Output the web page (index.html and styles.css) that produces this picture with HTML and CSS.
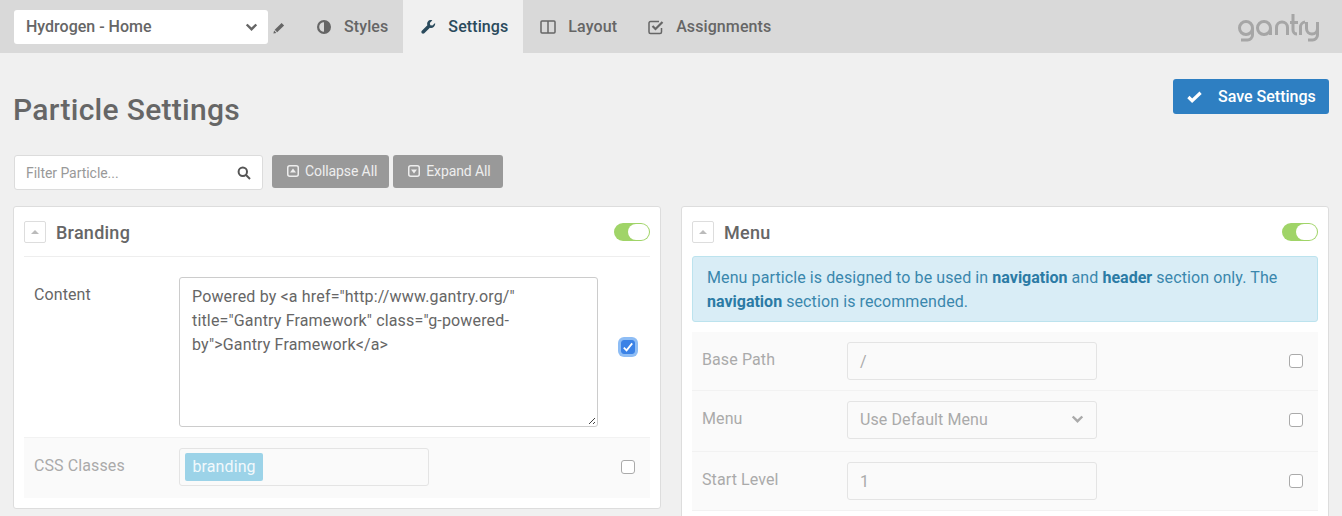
FILE: index.html
```html
<!DOCTYPE html>
<html lang="en">
<head>
  <meta charset="UTF-8">
  <title>Particle Settings</title>
  <link rel="stylesheet" href="styles.css">
</head>
<body>
  <nav class="topbar">
    <div class="outline-select">
      <span>Hydrogen - Home</span>
      <svg class="chevron" viewBox="0 0 12 8"><path d="M1.200 1.500 6 6.200l4.800-4.700"/></svg>
    </div>
    <svg class="pencil" viewBox="0 0 12 12"><path d="M8.600.9l2.500 2.500-6.900 6.900-2.500-2.500zM1.100 8.600l2.300 2.300-3 .7z"/></svg>
    <ul class="tabs">
      <li class="tab">
        <svg class="tab-icon" viewBox="0 0 16 16"><path d="M8 1a7 7 0 1 0 0 14A7 7 0 0 0 8 1zm0 2.200v9.600a4.800 4.800 0 0 1 0-9.600z" fill-rule="evenodd"/></svg>
        Styles
      </li>
      <li class="tab active">
        <svg class="tab-icon" viewBox="0 0 16 16"><path d="M15 3.800l-2.800 2.700-2.300-.5-.5-2.300L12.100.9c-1.800-.6-3.700-.1-4.700 1.200-.9 1.100-1.100 2.600-.6 4L.9 12c-.7.700-.7 1.900 0 2.600s1.900.7 2.600 0l6-5.900c1.400.5 2.900.2 4-.7 1.300-1.100 1.900-2.900 1.500-4.200z"/></svg>
        Settings
      </li>
      <li class="tab">
        <svg class="tab-icon line" viewBox="0 0 16 16"><rect x="1" y="2" width="14" height="12" rx="1"/><path d="M8 2v12"/></svg>
        Layout
      </li>
      <li class="tab">
        <svg class="tab-icon line" viewBox="0 0 16 16"><path d="M13.500 9v4a1.500 1.500 0 0 1-1.500 1.500H2.500A1.500 1.500 0 0 1 1 13V4a1.500 1.500 0 0 1 1.500-1.500H11"/><path class="thick" d="M4.500 7l3 3 7-7"/></svg>
        Assignments
      </li>
    </ul>
    <svg class="logo" viewBox="0 0 82 28">
      <circle cx="8" cy="14" r="6.500"/>
      <path d="M14.500 14v7a5 5 0 0 1-5 5H3"/>
      <circle cx="26" cy="14" r="6.500"/>
      <path d="M32.500 14v7"/>
      <path d="M38.500 21v-7.500a5.500 5.500 0 0 1 11 0V21"/>
      <path d="M55 0v16a4 4 0 0 0 4 4M52 8.500h8"/>
      <path d="M62.500 21v-8a5 5 0 0 1 4.500-5"/>
      <path d="M68.500 8v6.500a5.500 5.500 0 0 0 11 0V8M79.500 14v7a5 5 0 0 1-5 5H70"/>
    </svg>
  </nav>

  <main class="content">
    <div class="title-row">
      <h1>Particle Settings</h1>
      <button class="save-btn">
        <svg viewBox="0 0 16 12"><path d="M1.500 6l4 4 9-8.500"/></svg>
        Save Settings
      </button>
    </div>

    <div class="filter-row">
      <div class="filter">
        <span>Filter Particle...</span>
        <svg viewBox="0 0 14 14"><circle cx="5.800" cy="5.800" r="4.200"/><path d="M9 9l4 4"/></svg>
      </div>
      <button class="gray-btn">
        <svg viewBox="0 0 12 12"><rect x="0.750" y="0.750" width="10.500" height="10.500" rx="2"/><path class="arrow" d="M6 3.500l3 4H3z"/></svg>
        Collapse All
      </button>
      <button class="gray-btn">
        <svg viewBox="0 0 12 12"><rect x="0.750" y="0.750" width="10.500" height="10.500" rx="2"/><path class="arrow" d="M6 8.500l-3-4h6z"/></svg>
        Expand All
      </button>
    </div>

    <div class="columns">
      <section class="card">
        <header class="card-head with-line">
          <span class="collapse"></span>
          <h2>Branding</h2>
          <span class="toggle"></span>
        </header>
        <div class="field tall">
          <label>Content</label>
          <div class="textarea">Powered by &lt;a href="http://www.gantry.org/" title="Gantry Framework" class="g-powered-by"&gt;Gantry Framework&lt;/a&gt;
            <svg class="grip" viewBox="0 0 8 8"><path d="M7 1 1 7M7 5 5 7"/></svg>
          </div>
          <span class="check on">
            <svg viewBox="0 0 10 10"><path d="M1.500 5.500l2.300 2.300L8.500 2"/></svg>
          </span>
        </div>
        <div class="field off wide-bottom">
          <label>CSS Classes</label>
          <div class="input tags"><span class="tag">branding</span></div>
          <span class="check"></span>
        </div>
      </section>

      <section class="card">
        <header class="card-head">
          <span class="collapse"></span>
          <h2>Menu</h2>
          <span class="toggle"></span>
        </header>
        <p class="alert">Menu particle is designed to be used in <b>navigation</b> and <b>header</b> section only. The <b>navigation</b> section is recommended.</p>
        <div class="field off">
          <label>Base Path</label>
          <div class="input">/</div>
          <span class="check"></span>
        </div>
        <div class="field off wide-bottom">
          <label>Menu</label>
          <div class="input select">Use Default Menu
            <svg class="chevron" viewBox="0 0 12 8"><path d="M1.200 1.500 6 6.200l4.800-4.700"/></svg>
          </div>
          <span class="check"></span>
        </div>
        <div class="field off">
          <label>Start Level</label>
          <div class="input">1</div>
          <span class="check"></span>
        </div>
      </section>
    </div>
  </main>
</body>
</html>
```

FILE: styles.css
```css
* {
  box-sizing: border-box;
}

html, body {
  height: 516px;
  overflow: hidden;
}

body {
  margin: 0;
  background-color: #f0f0f0;
  color: #666666;
  font-family: Roboto, "Liberation Sans", sans-serif;
  font-size: 16px;
  letter-spacing: 0.1px;
}

/* top bar */
.topbar {
  display: flex;
  align-items: center;
  height: 53px;
  padding-left: 14px;
  background-color: #d9d9d9;
}

.outline-select {
  display: flex;
  align-items: center;
  justify-content: space-between;
  width: 254px;
  height: 34px;
  padding: 0 10px 0 12px;
  background-color: #fff;
  border-radius: 3px;
  font-weight: 500;
  letter-spacing: 0;
  color: #666;
}

.chevron {
  width: 13px;
  height: 8px;
  fill: none;
  stroke: #666;
  stroke-width: 2.400;
}

.pencil {
  width: 12px;
  height: 12px;
  margin: 2px 15px 0 5px;
  fill: #666;
}

.tabs {
  display: flex;
  align-self: stretch;
  margin: 0;
  padding: 0;
  list-style: none;
}

.tab {
  display: flex;
  align-items: center;
  gap: 12px;
  padding: 0 15px 0 16px;
  font-weight: 500;
  color: #666;
}

.tab.active {
  padding-left: 18px;
  background-color: #f0f0f0;
  color: #2a4a5c;
}

.tab.active .tab-icon {
  width: 15px;
}

.tab.active + .tab {
  padding-left: 17px;
}

.tab-icon {
  width: 16px;
  height: 16px;
  fill: currentColor;
}

.tab-icon.line {
  fill: none;
  stroke: currentColor;
  stroke-width: 1.500;
}

.tab-icon .thick {
  stroke-width: 2.200;
}

.logo {
  width: 82px;
  height: 28px;
  margin: 3px 22px 0 auto;
  fill: none;
  stroke: #a6a6a6;
  stroke-width: 3;
}

/* page content */
.content {
  padding: 26px 13px 0;
}

.title-row {
  display: flex;
  justify-content: space-between;
  height: 76px;
}

h1 {
  margin: 14px 0 0;
  font-size: 30px;
  font-weight: 500;
  line-height: 34px;
  letter-spacing: 0.3px;
  color: #666;
}

.save-btn {
  display: flex;
  align-items: center;
  gap: 16px;
  width: 156px;
  height: 35px;
  padding: 0 0 0 14px;
  border: 0;
  border-radius: 3px;
  background-color: #2e7fc2;
  color: #fff;
  font: 500 16px Roboto, sans-serif;
}

.save-btn svg {
  width: 15px;
  height: 12px;
  fill: none;
  stroke: #fff;
  stroke-width: 3.400;
}

.filter-row {
  display: flex;
  align-items: flex-start;
  gap: 4px;
  height: 51px;
  padding-left: 1px;
}

.filter {
  display: flex;
  align-items: center;
  justify-content: space-between;
  width: 249px;
  height: 35px;
  margin-right: 5px;
  padding: 0 11px 0 11px;
  background-color: #fff;
  border: 1px solid #dcdcdc;
  border-radius: 3px;
  font-size: 14px;
  letter-spacing: -0.05px;
  color: #999;
}

.filter svg {
  width: 14px;
  height: 14px;
  fill: none;
  stroke: #555;
  stroke-width: 2;
}

.gray-btn {
  display: flex;
  align-items: center;
  gap: 6px;
  height: 33px;
  padding: 0 12px 1px 15px;
  border: 0;
  border-radius: 3px;
  background-color: #999999;
  color: #eee;
  font: 400 14px Roboto, sans-serif;
  letter-spacing: -0.1px;
}

.gray-btn svg {
  width: 12px;
  height: 12px;
  fill: none;
  stroke: #eee;
  stroke-width: 1.500;
}

.gray-btn .arrow {
  fill: #eee;
  stroke: none;
}

.columns {
  display: grid;
  grid-template-columns: 648px 648px;
  gap: 20px;
  align-items: start;
}

/* particle cards */
.card {
  padding: 0 10px 10px;
  background-color: #fff;
  border: 1px solid #dddddd;
  border-radius: 3px;
}

.card-head {
  display: flex;
  align-items: center;
  height: 49px;
  padding-top: 1px;
}

.card-head.with-line {
  height: 50px;
  border-bottom: 1px solid #eeeeee;
}

.collapse {
  position: relative;
  width: 22px;
  height: 22px;
  margin-right: 10px;
  border: 1px solid #ddd;
  border-radius: 2px;
}

.collapse::after {
  content: "";
  position: absolute;
  left: 6px;
  top: 8px;
  border: 4px solid transparent;
  border-top: 0;
  border-bottom: 4px solid #bbb;
}

h2 {
  margin: 0;
  font-size: 18px;
  font-weight: 500;
  letter-spacing: 0.25px;
  color: #666;
}

.toggle {
  position: relative;
  width: 36px;
  height: 18px;
  margin-left: auto;
  background-color: #a0d468;
  border-radius: 9px;
}

.toggle::after {
  content: "";
  position: absolute;
  right: 1px;
  top: 1px;
  width: 21px;
  height: 16px;
  background-color: #fff;
  border-radius: 8px;
}

/* one row per option: label, control, override checkbox */
.field {
  display: flex;
  align-items: center;
  padding: 10px 15px 10px 10px;
}

.field.tall {
  padding-top: 20px;
  border-bottom: 1px solid #f2f2f2;
}

.field.tall .check {
  margin-bottom: 10px;
}

.field label {
  align-self: flex-start;
  width: 145px;
  padding-top: 6px;
  line-height: 24px;
  color: #666;
}

.textarea {
  position: relative;
  width: 419px;
  height: 150px;
  padding: 7px 16px 7px 12px;
  border: 1px solid #ccc;
  border-radius: 3px;
  line-height: 24px;
  letter-spacing: 0.16px;
  color: #666;
}

.grip {
  position: absolute;
  right: 1px;
  bottom: 1px;
  width: 8px;
  height: 8px;
  fill: none;
  stroke: #444;
  stroke-width: 1;
}

.check {
  display: flex;
  align-items: center;
  justify-content: center;
  width: 14px;
  height: 14px;
  margin-left: auto;
  background-color: #fff;
  border: 1px solid #aaa;
  border-radius: 3px;
}

.check.on {
  background-color: #3b82e6;
  border-color: #3b82e6;
  box-shadow: 0 0 0 3px #8ebdf5;
}

.check svg {
  width: 12px;
  height: 12px;
  flex: none;
  fill: none;
  stroke: #fff;
  stroke-width: 1.500;
}

.field.off {
  background-color: #fafafa;
  border-bottom: 1px solid #f2f2f2;
}

.field.off.wide-bottom {
  padding-bottom: 12px;
}

.card > .field.off.wide-bottom:last-child {
  border-bottom: 0;
}

.field.off label {
  color: #aaa;
}

.input {
  display: flex;
  align-items: center;
  justify-content: space-between;
  width: 250px;
  height: 38px;
  padding: 0 12px;
  border: 1px solid #e4e4e4;
  border-radius: 3px;
  color: #aaa;
}

.input.select {
  padding-bottom: 2px;
}

.input .chevron {
  stroke: #aaa;
}

.input.tags {
  padding: 0 5px;
}

.tag {
  height: 28px;
  padding: 0 7.500px;
  line-height: 28px;
  background-color: #9cd3e8;
  border-radius: 2px;
  color: #f2f9fc;
}

.alert {
  margin: 0 0 10px;
  padding: 9px 14px 7px;
  background-color: #d9edf6;
  border: 1px solid #bce3ee;
  border-radius: 3px;
  line-height: 24px;
  color: #3a87ad;
}

.alert b {
  font-weight: 700;
  letter-spacing: 0;
  color: #2b7ba5;
}
```
